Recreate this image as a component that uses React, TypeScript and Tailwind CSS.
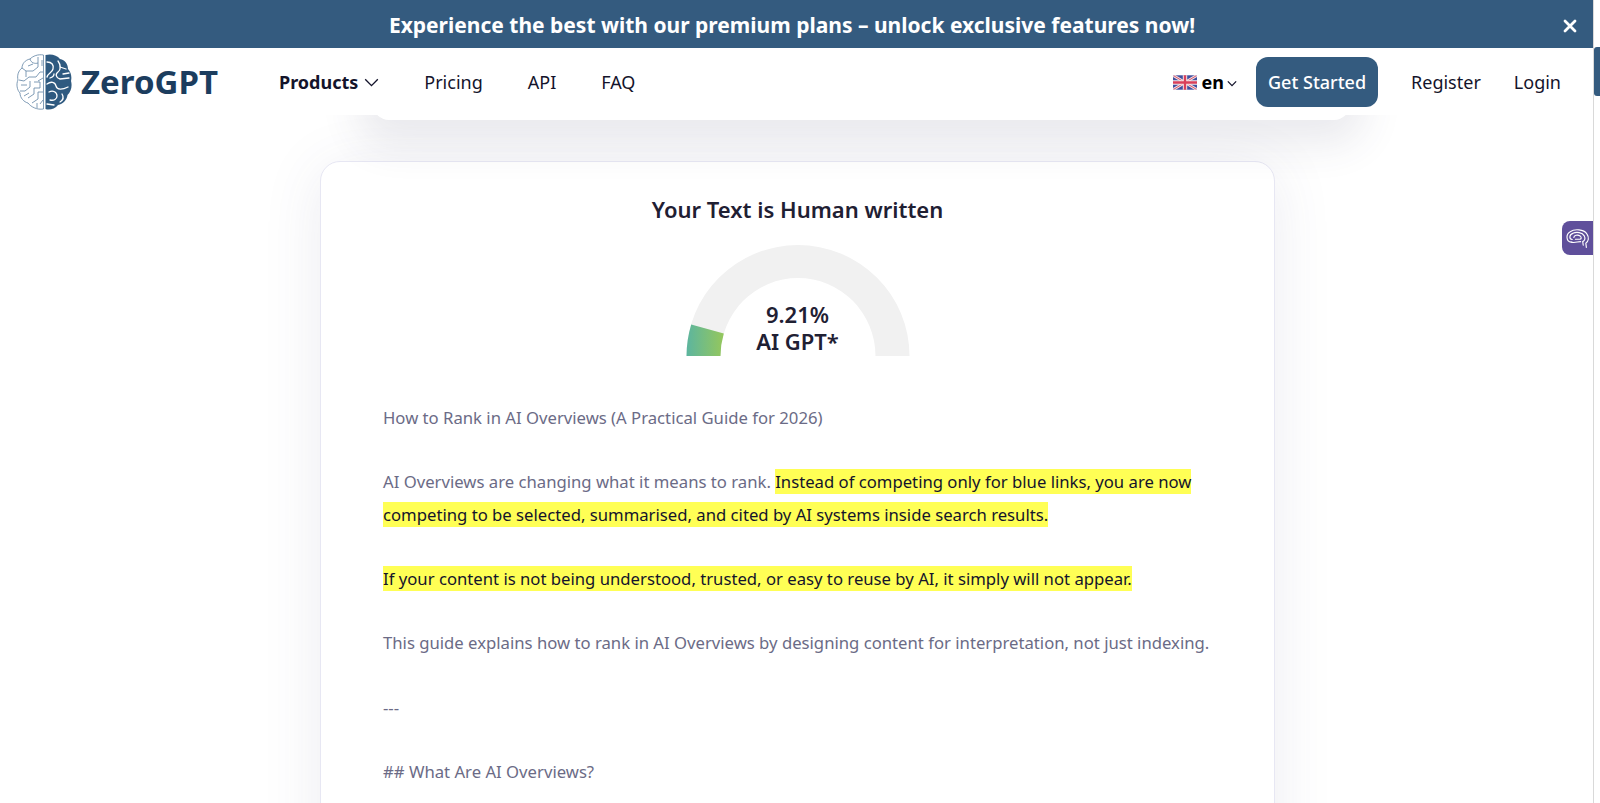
const navLinks = [
  { label: 'Pricing', className: 'ml-[45px]' },
  { label: 'API', className: 'ml-[45px]' },
  { label: 'FAQ', className: 'ml-[45px]' },
]

function BrainLogo() {
  return (
    <svg viewBox="0 0 56 56" className="w-[56px] h-[56px] shrink-0">
      {/* left half, outlined circuit */}
      <g fill="none" stroke="#5f83a3" strokeWidth="0.8" strokeLinejoin="round">
        <path d="M27.5 1 C22 0 17 2 14 5 C9 6 6 10 6 14 C2 17 1 22 2 26 C0 30 1 36 4 39 C4 44 8 48 12 49 C15 53 21 56 27.5 55 Z" />
        <path d="M14 5 C15 9 19 10 22 9 M22 3 L22 13 L17 17 L10 17 M6 14 L10 17 L10 23 M3 26 L8 27 L13 23 L20 23 L24 18 L27 18" />
        <path d="M14 27 L14 33 L9 37 L4 37 M18 28 L24 28 L24 34 L18 34 L18 40 L12 44 M27 38 L22 38 L22 45 L16 49 M27 46 L24 50" />
        <path d="M26 6 L26 12 M17 10 L12 12 M5 31 L11 31 M8 42 L13 39 M21 49 L21 54 M27 24 L22 27" />
      </g>
      {/* right half, filled */}
      <path fill="#2f5a80" d="M29.5 1 C35 -0.5 41 1 44 5 C49 6 52 10 52 15 C55 18 56 23 55 27 C56.5 32 55 38 51.5 41 C51 46 47 50 42 51 C39 55 33 56.5 29.5 55 Z" />
      <g fill="none" stroke="#ffffff" strokeWidth="1.3" strokeLinecap="round">
        <path d="M31 8 C36 8 38 11 37 15 C36 19 32 19 31 23" />
        <path d="M42 7 C45 11 45 16 42 18 C39 20 40 24 44 25 L53 24" />
        <path d="M34 24 C37 23 38 21 38 20" />
        <path d="M31 30 C35 27 39 28 40 32 C41 36 46 36 52 33" />
        <path d="M33 38 C37 36 41 38 41 42 C41 45 38 47 34 46" />
        <path d="M46 40 C48 43 47 46 44 48" />
        <path d="M44 13 L50 15" />
        <path d="M31 50 L38 51" />
        <path d="M47 20 L53 19" />
      </g>
    </svg>
  )
}

function UkFlag() {
  return (
    <svg viewBox="0 0 60 36" className="w-[24px] h-[15px] rounded-[2px] shrink-0">
      <rect width="60" height="36" fill="#3f4f9f" />
      <path d="M0 0 L60 36 M60 0 L0 36" stroke="#f3dfe2" strokeWidth="7" />
      <path d="M0 0 L60 36 M60 0 L0 36" stroke="#d9566b" strokeWidth="2.5" />
      <path d="M30 0 V36 M0 18 H60" stroke="#f6e9ea" strokeWidth="11" />
      <path d="M30 0 V36 M0 18 H60" stroke="#d9405a" strokeWidth="6" />
    </svg>
  )
}

function Gauge() {
  return (
    <div className="relative w-[224px] h-[112px] mt-[19px]">
      <svg viewBox="0 0 224 112" className="w-[224px] h-[112px]">
        <defs>
          <linearGradient id="gaugeGreen" x1="0" y1="0" x2="1" y2="0">
            <stop offset="0" stopColor="#5cb59f" />
            <stop offset="1" stopColor="#95c75c" />
          </linearGradient>
        </defs>
        <path d="M0.5 111 A111.5 111 0 0 1 223.5 111 L189.5 111 A77.5 78 0 0 0 34.5 111 Z" fill="#f1f1f1" />
        <path d="M0.5 111 A111.5 111 0 0 1 5.2 79.5 L37.8 88.6 A77.5 78 0 0 0 34.5 111 Z" fill="url(#gaugeGreen)" />
      </svg>
      <div className="absolute inset-x-0 top-[56px] text-center text-[22px] leading-[27px] font-semibold text-[#1f2033]">
        <div>9.21%</div>
        <div>AI GPT*</div>
      </div>
    </div>
  )
}

export default function App() {
  return (
    <div className="h-[803px] w-[1600px] overflow-hidden flex bg-white font-['Noto_Sans','Open_Sans',sans-serif]">
      <div className="relative flex-1 min-w-0 flex flex-col">
        {/* promo banner */}
        <div className="relative z-20 h-[48px] shrink-0 bg-[#345b7f] flex items-center justify-center pt-[3px] pr-[9px]">
          <span className="text-[21px] font-bold text-white">
            Experience the best with our premium plans – unlock exclusive features now!
          </span>
          <button className="absolute right-[16px] top-[19px] text-white">
            <svg viewBox="0 0 14 14" className="w-[14px] h-[14px]">
              <path d="M2 2 L12 12 M12 2 L2 12" stroke="#ffffff" strokeWidth="2.8" strokeLinecap="round" />
            </svg>
          </button>
        </div>

        {/* nav */}
        <header className="relative z-10 h-[67px] shrink-0 bg-white">
          <div className="absolute left-[373px] right-[243px] top-0 h-[72px] rounded-b-[16px] bg-white shadow-[0_10px_40px_14px_rgba(60,64,100,0.11)] -z-10" />
          <div className="absolute inset-0 bg-white -z-10" />
          <div className="h-full flex items-center pt-[1px] pl-[16px] pr-[32px] text-[18px] text-[#14142b]">
            <BrainLogo />
            <span className="ml-[9px] text-[33px] font-bold text-[#1c3d5e]">ZeroGPT</span>
            <span className="ml-[61px] font-bold flex items-center gap-[6px]">
              Products
              <svg viewBox="0 0 16 10" className="w-[15px] h-[9px]">
                <path d="M1 1.5 L8 8.5 L15 1.5" fill="none" stroke="#14142b" strokeWidth="1.5" />
              </svg>
            </span>
            {navLinks.map(link => (
              <span key={link.label} className={link.className}>{link.label}</span>
            ))}
            <div className="ml-auto flex items-center">
              <UkFlag />
              <span className="ml-[5px] font-bold text-black">en</span>
              <svg viewBox="0 0 12 8" className="ml-[3px] mt-[2px] w-[10px] h-[7px]">
                <path d="M1 1.5 L6 6.5 L11 1.5" fill="none" stroke="#14142b" strokeWidth="1.5" />
              </svg>
              <button className="ml-[19px] w-[122px] h-[50px] rounded-[12px] bg-[#345b7f] text-white font-medium text-[18px]">
                Get Started
              </button>
              <span className="ml-[33px]">Register</span>
              <span className="ml-[33px]">Login</span>
            </div>
          </div>
        </header>

        {/* result card */}
        <main className="flex justify-center pt-[46px]">
          <section className="w-[955px] ml-[2px] h-[900px] rounded-[20px] border border-[#e7e7f3] bg-white shadow-[0_8px_60px_rgba(70,72,120,0.1)] px-[62px] pt-[30px]">
            <div className="flex flex-col items-center">
              <h1 className="text-[22px] leading-[34px] font-semibold text-[#1f2033]">Your Text is Human written</h1>
              <Gauge />
            </div>
            <div className="mt-[45px] text-[16.7px] leading-[32.2px] text-[#6b6b86]">
              <p>How to Rank in AI Overviews (A Practical Guide for 2026)</p>
              <p className="mt-[32.2px]">
                AI Overviews are changing what it means to rank.{' '}
                <mark className="bg-[#ffff55] py-px text-[#14142b]">Instead of competing only for blue links, you are now competing to be selected, summarised, and cited by AI systems inside search results.</mark>
              </p>
              <p className="mt-[32.2px]">
                <mark className="bg-[#ffff55] py-px text-[#14142b]">If your content is not being understood, trusted, or easy to reuse by AI, it simply will not appear.</mark>
              </p>
              <p className="mt-[32.2px]">This guide explains how to rank in AI Overviews by designing content for interpretation, not just indexing.</p>
              <p className="mt-[32.2px]">---</p>
              <p className="mt-[32.2px]">## What Are AI Overviews?</p>
            </div>
          </section>
        </main>

        {/* side tab */}
        <div className="absolute right-0 top-[221px] z-20 w-[31px] h-[34px] rounded-l-[8px] bg-[#5f4f9b] flex items-center justify-center">
          <svg viewBox="0 0 24 20" className="w-[25px] h-[21px]">
            <g fill="none" stroke="#ffffff" strokeWidth="1.1" strokeLinecap="round">
              <path d="M6 13.5 C1 13 0.5 6 5 3.5 C9 0.5 18 1 21 5.5 C23.5 9 22.5 13 20 14.5 L20.5 18.5" />
              <path d="M7 11 C3.5 10.5 4 6 8 4.8 C11 3.5 16.5 4 18.5 7.5 C19.8 10 19 12 17 13 L17.5 16.5" />
              <path d="M6 13.5 C9.5 14.5 12 13 15 13" />
              <path d="M8.5 9 C8.5 7 12 6 14.5 7.5 C16 8.8 15.8 10.2 14.5 10.7 L10 10.7" />
            </g>
          </svg>
        </div>
      </div>

      {/* scrollbar */}
      <div className="relative w-[7px] shrink-0 bg-white border-l border-[#d9d9d9]">
        <div className="absolute left-0 right-0 top-[47px] h-[49px] rounded-l-[3px] bg-[#345b7f]" />
      </div>
    </div>
  )
}
